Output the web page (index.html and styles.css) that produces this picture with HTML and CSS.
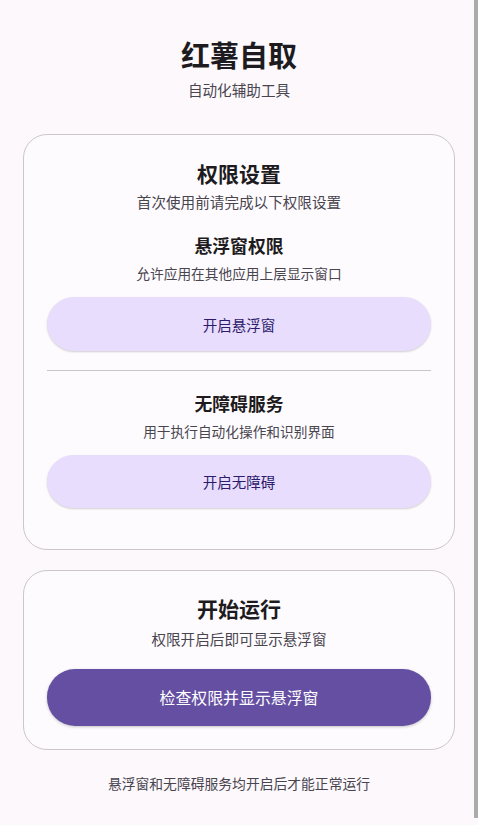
FILE: index.html
```html
<!DOCTYPE html>
<html lang="zh-CN">
<head>
<meta charset="utf-8">
<title>红薯自取</title>
<link rel="stylesheet" href="styles.css">
</head>
<body>
<main class="page">
  <header class="hero">
    <h1 class="app-title">红薯自取</h1>
    <p class="app-sub">自动化辅助工具</p>
  </header>

  <section class="card card-perm">
    <h2 class="card-title">权限设置</h2>
    <p class="card-desc">首次使用前请完成以下权限设置</p>

    <div class="perm">
      <h3 class="perm-title">悬浮窗权限</h3>
      <p class="perm-desc">允许应用在其他应用上层显示窗口</p>
      <button class="btn btn-tonal">开启悬浮窗</button>
    </div>

    <hr class="divider">

    <div class="perm perm-second">
      <h3 class="perm-title">无障碍服务</h3>
      <p class="perm-desc">用于执行自动化操作和识别界面</p>
      <button class="btn btn-tonal">开启无障碍</button>
    </div>
  </section>

  <section class="card card-run">
    <h2 class="card-title">开始运行</h2>
    <p class="card-desc run-desc">权限开启后即可显示悬浮窗</p>
    <button class="btn btn-filled">检查权限并显示悬浮窗</button>
  </section>

  <p class="footer-note">悬浮窗和无障碍服务均开启后才能正常运行</p>
</main>
<div class="scrollbar"></div>
</body>
</html>
```

FILE: styles.css
```css
html, body {
  margin: 0;
  padding: 0;
  background: #fcf8fc;
}
body {
  font-family: "Noto Sans CJK SC", "Noto Sans", sans-serif;
  color: #1d1b20;
}
.page {
  display: flex;
  flex-direction: column;
  padding: 36px 23px 0 23px;
}
.hero {
  display: flex;
  flex-direction: column;
  align-items: center;
}
.app-title {
  margin: 0;
  font-size: 29px;
  line-height: 36px;
  font-weight: 700;
  color: #1d1b20;
}
.app-sub {
  margin: 8px 0 0;
  font-size: 14.6px;
  line-height: 20px;
  color: #49454f;
}
.card {
  margin-top: 34px;
  border: 1px solid #cbc7cd;
  border-radius: 24px;
  background: #fdfbfe;
  display: flex;
  flex-direction: column;
  align-items: stretch;
  text-align: center;
  padding: 24px 23px 41px;
}
.card-title {
  margin: 0;
  font-size: 21px;
  line-height: 28px;
  font-weight: 600;
  color: #1d1b20;
}
.card-desc {
  margin: 5px 0 0;
  font-size: 14.6px;
  line-height: 20px;
  color: #49454f;
}
.perm {
  display: flex;
  flex-direction: column;
  align-items: stretch;
  margin-top: 21px;
}
.perm-second {
  margin-top: 20px;
}
.perm-title {
  margin: 0;
  font-size: 17.8px;
  line-height: 24px;
  font-weight: 600;
  color: #1d1b20;
}
.perm-desc {
  margin: 6px 0 0;
  font-size: 13.7px;
  line-height: 20px;
  color: #49454f;
}
.btn {
  border: none;
  border-radius: 28px;
  font-family: inherit;
  cursor: pointer;
}
.btn-tonal {
  margin-top: 14px;
  height: 54px;
  background: #e9ddfe;
  color: #2c1a6a;
  font-size: 14.5px;
  font-weight: 400;
  box-shadow: 0 1px 2px rgba(0, 0, 0, 0.18);
}
.perm-second .btn-tonal {
  height: 53px;
}
.divider {
  margin: 19px 0 0;
  border: none;
  border-top: 1px solid #cac4cf;
  height: 0;
}
.card-run {
  margin-top: 20px;
  padding: 23px 23px 23px;
}
.run-desc {
  margin-top: 7px;
}
.btn-filled {
  margin-top: 20px;
  height: 57px;
  background: #654fa2;
  color: #ffffff;
  font-size: 15.9px;
  font-weight: 400;
  box-shadow: 0 1px 3px rgba(0, 0, 0, 0.22);
}
.footer-note {
  margin: 23px 0 0;
  text-align: center;
  font-size: 13.8px;
  line-height: 20px;
  color: #49454f;
}
.scrollbar {
  position: fixed;
  top: 0;
  right: 0;
  width: 4px;
  height: 818px;
  background: #ababab;
}
```
